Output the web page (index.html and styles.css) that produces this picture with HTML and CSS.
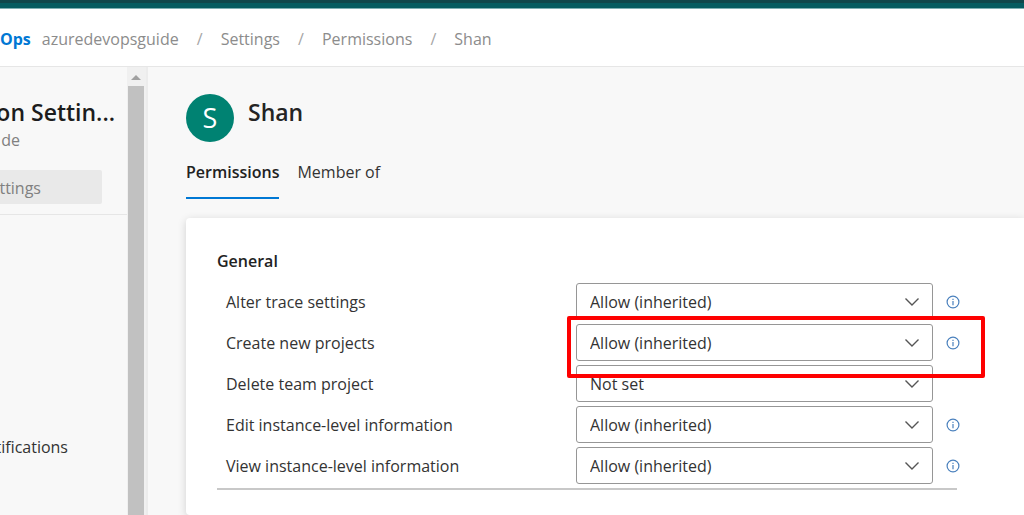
FILE: index.html
```html
<!DOCTYPE html>
<html lang="en">
<head>
<meta charset="utf-8">
<meta name="viewport" content="width=device-width, initial-scale=1">
<title>Permissions</title>
<link rel="stylesheet" href="styles.css">
</head>
<body>
<svg class="sprite" aria-hidden="true">
  <symbol id="chevron" viewBox="0 0 16 16"><path d="M1.5 4.5 8 11l6.500-6.500" fill="none" stroke="currentColor" stroke-width="1.400"/></symbol>
  <symbol id="info" viewBox="0 0 14 14"><circle cx="7" cy="7" r="5.900" fill="none" stroke="currentColor" stroke-width="1.200"/><path d="M7 6v4.200M7 3.700v1.300" fill="none" stroke="currentColor" stroke-width="1.200"/></symbol>
</svg>
<div class="browser-strip"></div>
<header class="header">
  <a class="brand" href="#">Ops</a>
  <nav class="crumbs" aria-label="Breadcrumb">
    <a href="#">azuredevopsguide</a><span class="slash">/</span>
    <a href="#">Settings</a><span class="slash">/</span>
    <a href="#">Permissions</a><span class="slash">/</span>
    <a href="#">Shan</a>
  </nav>
</header>
<div class="body">
  <aside class="sidebar">
    <div class="side-head">
      <h2 class="side-title">on Settin...</h2>
      <p class="side-sub">de</p>
      <button class="side-search" type="button">ttings</button>
    </div>
    <a class="side-link" href="#">tifications</a>
  </aside>
  <div class="scrollbar"><span class="scroll-up"></span><span class="scroll-thumb"></span></div>
  <main class="main">
    <div class="identity">
      <span class="avatar">S</span>
      <h1 class="name">Shan</h1>
    </div>
    <div class="tabs" role="tablist">
      <button class="tab tab-active" type="button" role="tab" aria-selected="true">Permissions</button>
      <button class="tab" type="button" role="tab" aria-selected="false">Member of</button>
    </div>
    <section class="card">
      <div class="group">
        <h3 class="group-title">General</h3>
        <div class="row">
          <label for="p1">Alter trace settings</label>
          <span class="picker"><select id="p1"><option>Allow (inherited)</option></select><svg class="chevron"><use href="#chevron"/></svg></span>
          <svg class="info"><use href="#info"/></svg>
        </div>
        <div class="row marked">
          <label for="p2">Create new projects</label>
          <span class="picker"><select id="p2"><option>Allow (inherited)</option></select><svg class="chevron"><use href="#chevron"/></svg></span>
          <svg class="info"><use href="#info"/></svg>
        </div>
        <div class="row">
          <label for="p3">Delete team project</label>
          <span class="picker"><select id="p3"><option>Not set</option></select><svg class="chevron"><use href="#chevron"/></svg></span>
        </div>
        <div class="row">
          <label for="p4">Edit instance-level information</label>
          <span class="picker"><select id="p4"><option>Allow (inherited)</option></select><svg class="chevron"><use href="#chevron"/></svg></span>
          <svg class="info"><use href="#info"/></svg>
        </div>
        <div class="row">
          <label for="p5">View instance-level information</label>
          <span class="picker"><select id="p5"><option>Allow (inherited)</option></select><svg class="chevron"><use href="#chevron"/></svg></span>
          <svg class="info"><use href="#info"/></svg>
        </div>
      </div>
    </section>
  </main>
</div>
</body>
</html>
```
FILE: styles.css
```css
*, *::before, *::after { box-sizing: border-box; }
html, body { height: 100%; }
body {
  margin: 0;
  display: flex;
  flex-direction: column;
  overflow: hidden;
  background: #f8f8f8;
  color: #333;
  font: 16px/24px "Open Sans", "Noto Sans", sans-serif;
}
h1, h2, h3, p { margin: 0; }
a { color: inherit; text-decoration: none; }
button, select { font: inherit; color: inherit; }
.sprite { display: none; }

.browser-strip {
  flex: none;
  height: 9px;
  background: #065c60;
  border-top: 3px solid #10474b;
  border-bottom: 1px solid #7fb0b2;
}
.header {
  flex: none;
  display: flex;
  align-items: center;
  gap: 11px;
  height: 58px;
  padding-top: 3px;
  background: #fff;
  border-bottom: 1px solid #e6e6e6;
}
.brand { color: #0078d4; font-weight: 700; }
.crumbs { display: flex; color: #8c8c8c; }
.slash { width: 42px; text-align: center; color: #a6a6a6; }

.body { flex: 1; display: flex; min-height: 0; }
.sidebar { flex: none; width: 127px; overflow: hidden; }
.side-head { padding: 29px 0 10px; border-bottom: 1px solid #e6e6e6; }
.side-title {
  display: flex;
  justify-content: flex-end;
  padding-right: 12px;
  color: #1c1c1c;
  font-size: 23px;
  font-weight: 600;
  line-height: 32px;
  white-space: nowrap;
}
.side-sub { display: flex; justify-content: flex-end; width: 20px; color: #808080; }
.side-search {
  display: flex;
  justify-content: flex-end;
  align-items: center;
  width: 102px;
  height: 34px;
  margin-top: 18px;
  padding: 2px 61px 0 0;
  border: 0;
  border-radius: 0 2px 2px 0;
  background: #e9e9e9;
  color: #808080;
}
.side-link { display: flex; justify-content: flex-end; width: 68px; margin-top: 220px; }

.scrollbar {
  flex: none;
  width: 21px;
  display: flex;
  flex-direction: column;
  align-items: center;
  padding-right: 1px;
  background: #f0f0f0;
  border-right: 2px solid #ececec;
}
.scroll-up {
  margin: 8px 0 6px;
  border: 5px solid transparent;
  border-top: 0;
  border-bottom-color: #a0a0a0;
}
.scroll-thumb { flex: 1; width: 16px; background: #c1c1c1; }

.main {
  flex: 1;
  display: flex;
  flex-direction: column;
  min-width: 0;
  padding: 27px 0 0 38px;
}
.identity { display: flex; gap: 14px; }
.avatar {
  display: flex;
  align-items: center;
  justify-content: center;
  width: 48px;
  height: 48px;
  border-radius: 50%;
  background: #008272;
  color: #fff;
  font-size: 27px;
}
.name { color: #242424; font-size: 23px; font-weight: 600; line-height: 36px; }
.tabs { display: flex; gap: 18px; margin-top: 16px; }
.tab {
  height: 41px;
  padding: 0 0 12px;
  border: 0;
  border-bottom: 2px solid transparent;
  background: none;
}
.tab-active { border-color: #0078d4; color: #222; font-weight: 600; }

.card {
  flex: 1;
  margin-top: 19px;
  padding: 31px 67px 0 31px;
  border-radius: 4px 0 0 4px;
  background: #fff;
  box-shadow: 0 2px 8px rgba(0, 0, 0, 0.16);
}
.group { padding-bottom: 4px; border-bottom: 2px solid #c8c8c8; }
.group-title { margin-bottom: 10px; color: #222; font-size: 16px; font-weight: 600; line-height: 24px; }
.row {
  position: relative;
  display: grid;
  grid-template-columns: 350px 1fr 14px;
  column-gap: 13px;
  align-items: center;
  height: 37px;
  margin: 0 -3px 4px 9px;
}
.row:last-child { margin-bottom: 0; }
.picker { display: flex; position: relative; margin-left: -13px; }
.picker select {
  appearance: none;
  width: 100%;
  height: 37px;
  padding: 0 40px 0 13px;
  border: 1px solid #969696;
  border-radius: 3px;
  background: #fff;
}
.chevron {
  position: absolute;
  right: 13px;
  top: 11px;
  width: 16px;
  height: 16px;
  color: #555;
  pointer-events: none;
}
.info { width: 14px; height: 14px; color: #4a80bd; }
.marked::after {
  content: "";
  position: absolute;
  z-index: 1;
  left: 341px;
  right: -25px;
  top: -8px;
  height: 62px;
  border: 4px solid #fe0000;
  border-radius: 2px;
  pointer-events: none;
}
```
